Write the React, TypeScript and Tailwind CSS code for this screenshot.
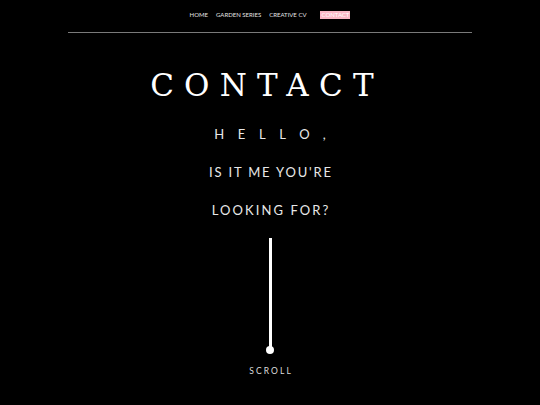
import React from "react";

export default function App() {
  return (
    <div className="w-[540px] h-[405px] bg-black text-white flex flex-col items-center overflow-hidden" style={{ fontFamily: "Lato, 'Noto Sans', sans-serif" }}>
      <nav className="h-[29px] flex items-center justify-center gap-[8px] text-[6px] leading-none text-[#e5e5e5]">
        <span>HOME</span>
        <span>GARDEN SERIES</span>
        <span>CREATIVE CV</span>
        <span className="ml-[6px] bg-[#f9b8c6] text-white px-[1px] py-[1px]">CONTACT</span>
      </nav>
      <div className="w-[404px] h-[1px] bg-[#7a7a7a] mt-[3px]" />
      <h1 className="mt-[37px] mr-[6px] text-[31px] leading-none tracking-[0.33em] text-white" style={{ fontFamily: "'DejaVu Serif', 'Liberation Serif', serif" }}>
        CONTACT
      </h1>
      <p className="mt-[27px] text-[13px] leading-none tracking-[1.05em] pl-[1.05em] text-[#e8e8e8]">HELLO,</p>
      <p className="mt-[25px] text-[13px] leading-none tracking-[0.14em] pl-[0.14em] text-[#e8e8e8]">IS IT ME YOU'RE</p>
      <p className="mt-[25px] text-[13px] leading-none tracking-[0.16em] pl-[0.16em] text-[#e8e8e8]">LOOKING FOR?</p>
      <div className="mt-[21px] flex flex-col items-center">
        <div className="w-[3px] h-[111px] bg-white" />
        <div className="w-[8px] h-[8px] rounded-full bg-white -mt-[3px]" />
      </div>
      <p className="mt-[13px] text-[8.5px] leading-none tracking-[0.25em] pl-[0.25em] text-[#dcdcdc]">SCROLL</p>
    </div>
  );
}
